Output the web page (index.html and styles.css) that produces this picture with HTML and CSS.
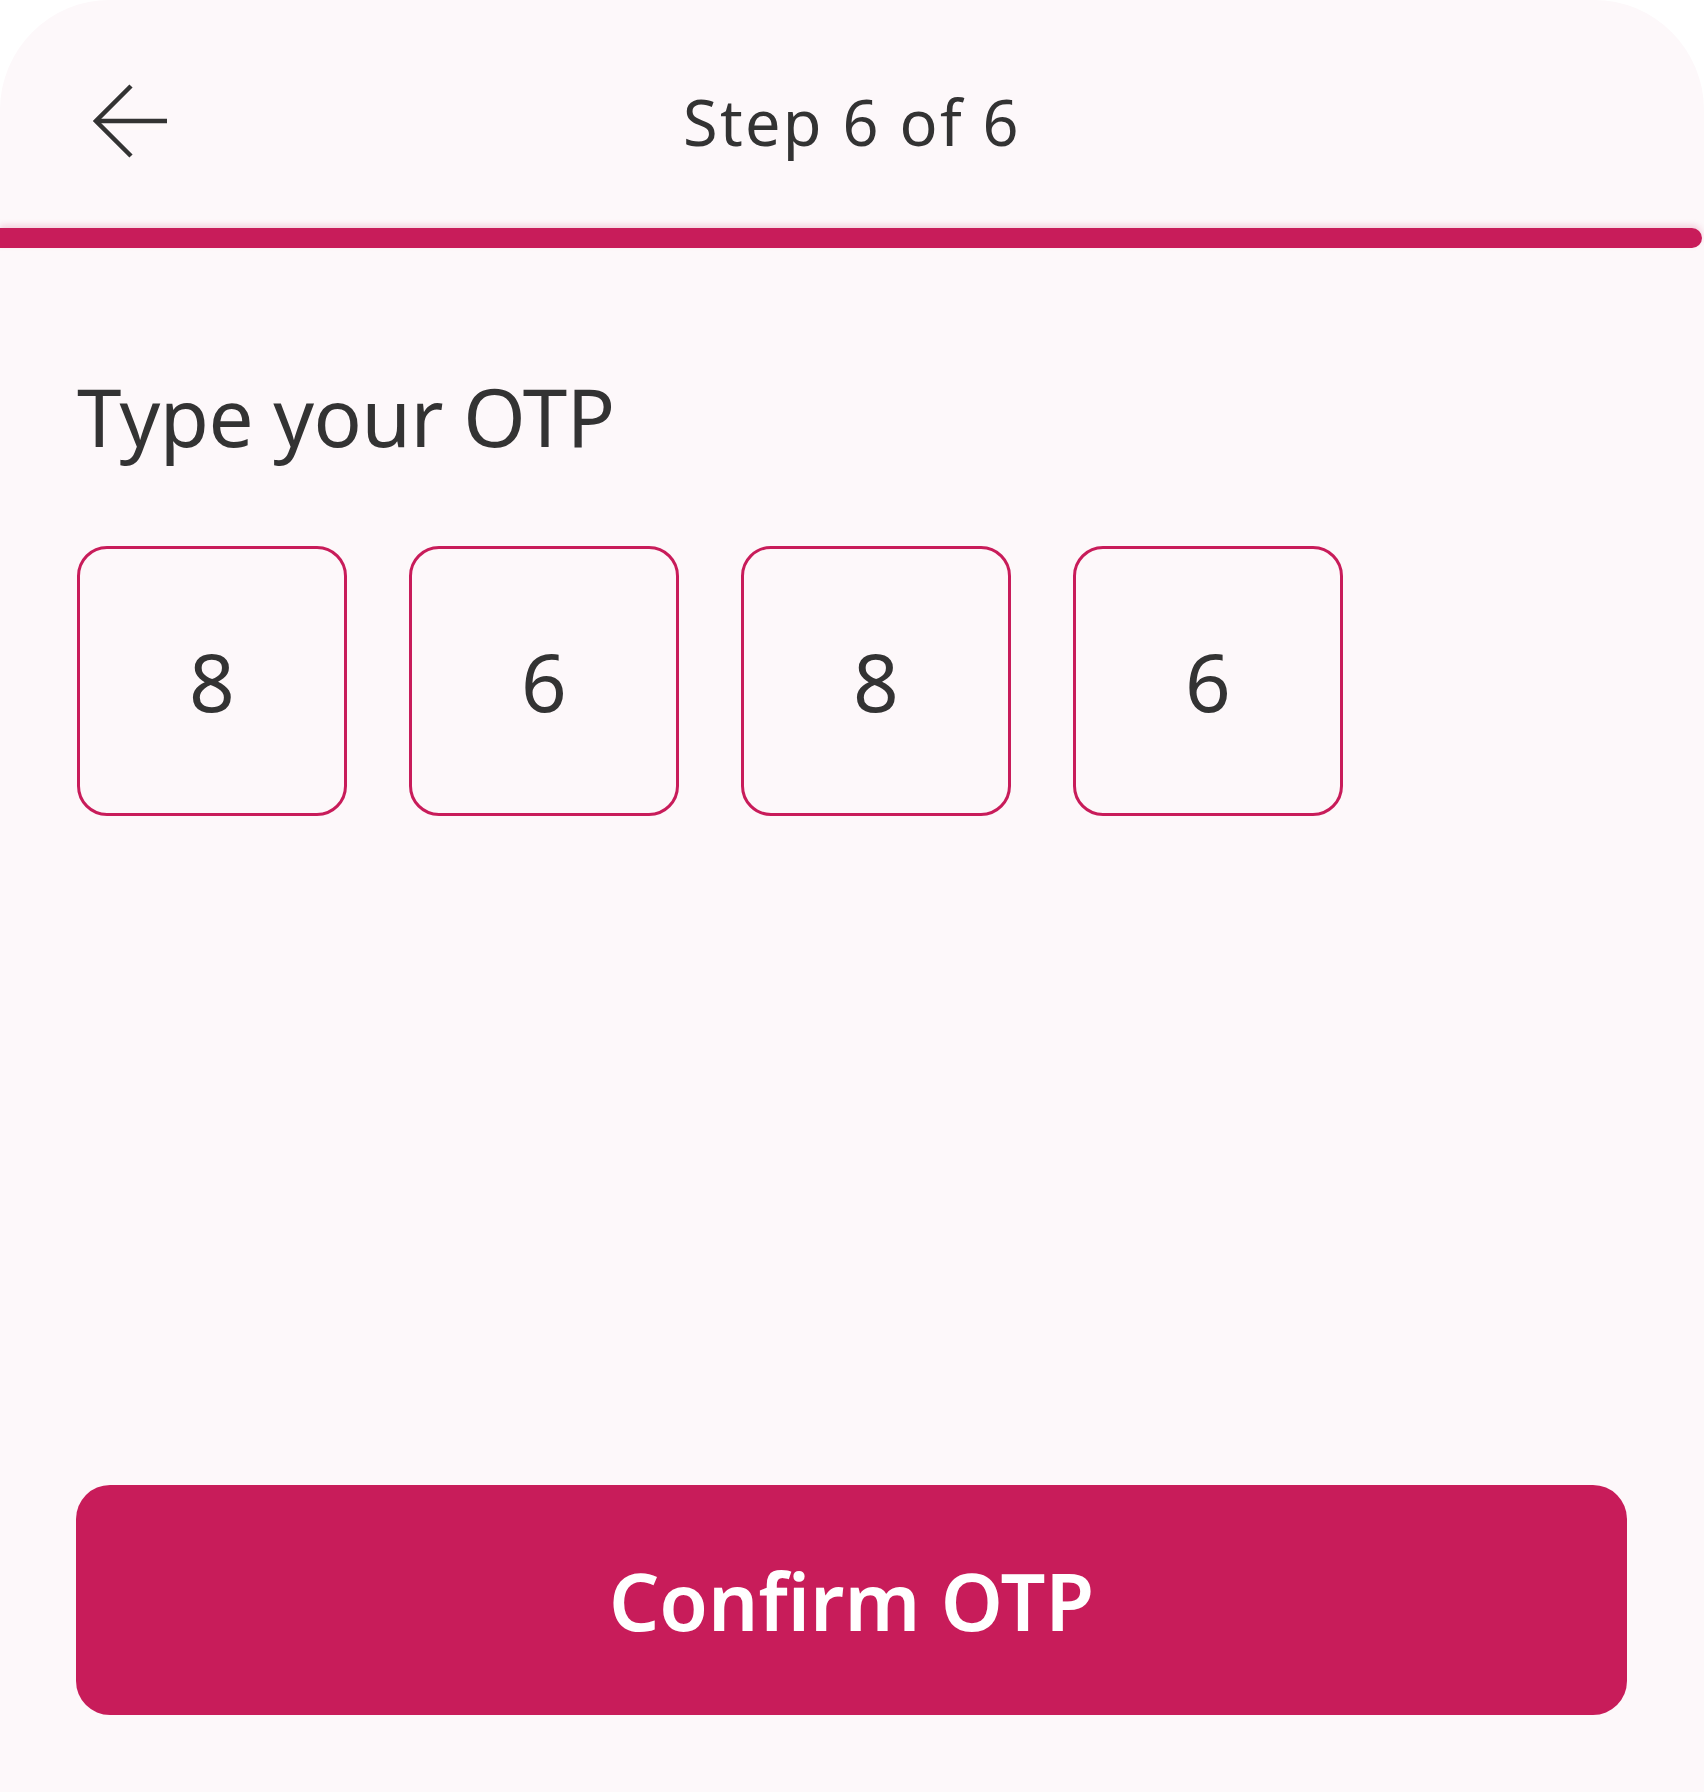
FILE: index.html
```html
<!DOCTYPE html>
<html lang="en">
<head>
<meta charset="utf-8">
<title>Step 6 of 6 - Type your OTP</title>
<link rel="stylesheet" href="styles.css">
</head>
<body>
<div class="screen">
  <header class="topbar">
    <button class="back" aria-label="Back">
      <svg width="76" height="74" viewBox="0 0 76 74" fill="none" stroke="#333333" stroke-width="4.5" stroke-linecap="butt" stroke-linejoin="miter">
        <path d="M38 2 L3 37 L38 72"/>
        <path d="M4 37 H74"/>
      </svg>
    </button>
    <div class="title">Step 6 of 6</div>
    <div class="spacer"></div>
  </header>
  <div class="progress"><div class="progress-fill"></div></div>
  <main class="content">
    <h1 class="heading">Type your OTP</h1>
    <div class="otp-row">
      <div class="otp-box">8</div>
      <div class="otp-box">6</div>
      <div class="otp-box">8</div>
      <div class="otp-box">6</div>
    </div>
  </main>
  <footer class="actions">
    <button class="confirm">Confirm OTP</button>
  </footer>
</div>
</body>
</html>
```

FILE: styles.css
```css
html, body {
  margin: 0;
  padding: 0;
  background: #ffffff;
}

.screen {
  width: 1704px;
  height: 1792px;
  background: #fdf8fa;
  border-radius: 110px 110px 0 0;
  display: flex;
  flex-direction: column;
  font-family: "Noto Sans", "Open Sans", sans-serif;
  color: #333333;
  box-sizing: border-box;
}

.topbar {
  height: 228px;
  box-sizing: border-box;
  padding: 14px 0 0 0;
  display: grid;
  grid-template-columns: 1fr auto 1fr;
  align-items: center;
}

.back {
  justify-self: start;
  margin-left: 93px;
  padding: 0;
  border: none;
  background: transparent;
  width: 76px;
  height: 74px;
  display: flex;
}

.title {
  font-size: 63px;
  line-height: 1;
  letter-spacing: 2.3px;
  color: #333333;
  white-space: nowrap;
}

.progress {
  height: 20px;
  width: 1702px;
  box-shadow: 0 -3px 6px rgba(200, 28, 90, 0.18);
  border-radius: 0 10px 10px 0;
}

.progress-fill {
  height: 100%;
  width: 100%;
  background: #c81c5a;
  border-radius: 0 10px 10px 0;
}

.content {
  padding: 0 77px;
  display: flex;
  flex-direction: column;
}

.heading {
  margin: 120px 0 0 0;
  font-size: 80px;
  font-weight: 400;
  line-height: 96px;
  color: #333333;
  letter-spacing: -0.5px;
}

.otp-row {
  margin-top: 82px;
  display: flex;
  gap: 62px;
}

.otp-box {
  width: 270px;
  height: 270px;
  box-sizing: border-box;
  border: 3px solid #c81c5a;
  border-radius: 30px;
  display: flex;
  align-items: center;
  justify-content: center;
  font-size: 80px;
  line-height: 1;
  color: #333333;
}

.actions {
  margin-top: auto;
  padding: 0 77px 77px 76px;
}

.confirm {
  width: 100%;
  height: 230px;
  border: none;
  border-radius: 34px;
  background: #c81c5a;
  color: #ffffff;
  font-family: "Noto Sans", "Open Sans", sans-serif;
  font-size: 79px;
  font-weight: 600;
  letter-spacing: 0;
  display: flex;
  align-items: center;
  justify-content: center;
  padding: 0;
}
```
